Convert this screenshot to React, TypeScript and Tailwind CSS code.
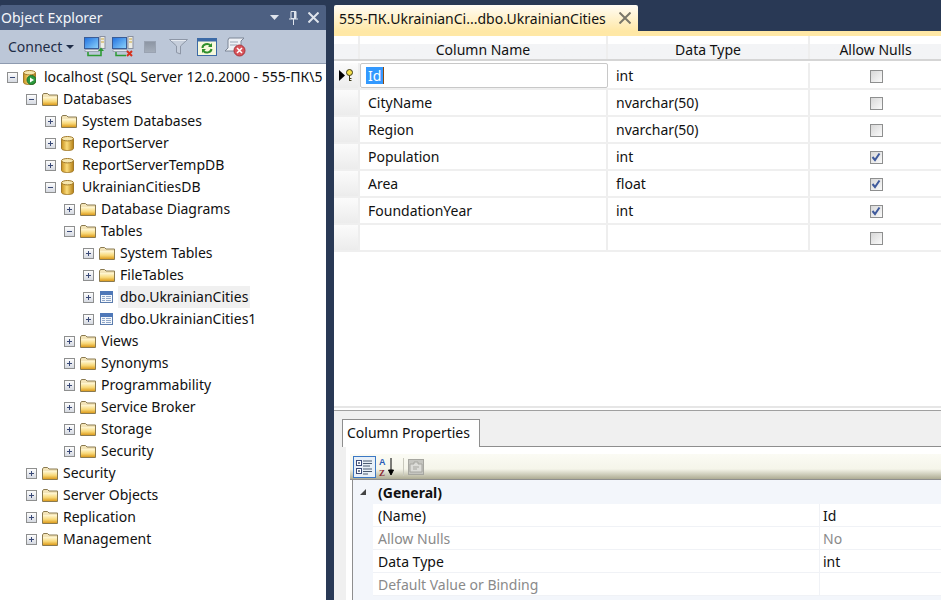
import React from "react";

const font = "font-['Noto_Sans','Open_Sans',sans-serif]";

type TreeItem = {
  label: string;
  level: number;
  icon: "server" | "db" | "folder" | "table";
  open?: boolean;
  selected?: boolean;
};

const tree: TreeItem[] = [
  { label: "localhost (SQL Server 12.0.2000 - 555-ПК\\5", level: 0, icon: "server", open: true },
  { label: "Databases", level: 1, icon: "folder", open: true },
  { label: "System Databases", level: 2, icon: "folder" },
  { label: "ReportServer", level: 2, icon: "db" },
  { label: "ReportServerTempDB", level: 2, icon: "db" },
  { label: "UkrainianCitiesDB", level: 2, icon: "db", open: true },
  { label: "Database Diagrams", level: 3, icon: "folder" },
  { label: "Tables", level: 3, icon: "folder", open: true },
  { label: "System Tables", level: 4, icon: "folder" },
  { label: "FileTables", level: 4, icon: "folder" },
  { label: "dbo.UkrainianCities", level: 4, icon: "table", selected: true },
  { label: "dbo.UkrainianCities1", level: 4, icon: "table" },
  { label: "Views", level: 3, icon: "folder" },
  { label: "Synonyms", level: 3, icon: "folder" },
  { label: "Programmability", level: 3, icon: "folder" },
  { label: "Service Broker", level: 3, icon: "folder" },
  { label: "Storage", level: 3, icon: "folder" },
  { label: "Security", level: 3, icon: "folder" },
  { label: "Security", level: 1, icon: "folder" },
  { label: "Server Objects", level: 1, icon: "folder" },
  { label: "Replication", level: 1, icon: "folder" },
  { label: "Management", level: 1, icon: "folder" },
];

const columns = [
  { name: "Id", type: "int", nulls: false },
  { name: "CityName", type: "nvarchar(50)", nulls: false },
  { name: "Region", type: "nvarchar(50)", nulls: false },
  { name: "Population", type: "int", nulls: true },
  { name: "Area", type: "float", nulls: true },
  { name: "FoundationYear", type: "int", nulls: true },
  { name: "", type: "", nulls: false },
];

const props = [
  { label: "(Name)", value: "Id" },
  { label: "Allow Nulls", value: "No", muted: true },
  { label: "Data Type", value: "int" },
  { label: "Default Value or Binding", value: "", muted: true },
];

const Expander = ({ open }: { open?: boolean }) => (
  <svg width="11" height="11" viewBox="0 0 11 11" className="shrink-0">
    <defs>
      <linearGradient id="exp" x1="0" y1="0" x2="0" y2="1">
        <stop offset="0" stopColor="#ffffff" />
        <stop offset="1" stopColor="#d4d8e0" />
      </linearGradient>
    </defs>
    <rect x="0.5" y="0.5" width="10" height="10" fill="url(#exp)" stroke="#8e8f8f" />
    <path d={open ? "M3 5.5h5" : "M3 5.5h5M5.5 3v5"} stroke="#3a4a78" fill="none" />
  </svg>
);

const FolderIcon = () => (
  <svg width="16" height="13" viewBox="0 0 16 13">
    <defs>
      <linearGradient id="fold" x1="0" y1="0" x2="0" y2="1">
        <stop offset="0" stopColor="#fff8d8" />
        <stop offset="0.55" stopColor="#f8d878" />
        <stop offset="1" stopColor="#dd9c1e" />
      </linearGradient>
    </defs>
    <path d="M.5 2 1.500.5h4L7 2h8.500v10.500H.5z" fill="#f3e4b8" stroke="#8a7a50" />
    <rect x="1" y="4" width="14" height="8" fill="url(#fold)" />
  </svg>
);

const DbIcon = ({ running }: { running?: boolean }) => (
  <svg width="13" height="15" viewBox="0 0 13 15">
    <defs>
      <linearGradient id="cyl" x1="0" y1="0" x2="1" y2="0">
        <stop offset="0" stopColor="#c68f1e" />
        <stop offset="0.45" stopColor="#fbdc7b" />
        <stop offset="1" stopColor="#b47f16" />
      </linearGradient>
    </defs>
    <path d="M.5 3v9.500c0 1.200 2.700 2 6 2s6-.8 6-2V3z" fill="url(#cyl)" stroke="#a27a2a" />
    <ellipse cx="6.500" cy="2.700" rx="6" ry="2.200" fill="#f7e7ae" stroke="#a27a2a" />
    {running && (
      <>
        <circle cx="8.500" cy="10" r="4.500" fill="#2c9a3e" stroke="#1e6e2c" />
        <path d="M7 7.500v5l4-2.500z" fill="#fff" />
      </>
    )}
  </svg>
);

const TableIcon = () => (
  <svg width="13" height="12" viewBox="0 0 13 12" className="ml-px">
    <rect x="0.5" y="0.5" width="12" height="11" fill="#f4f7fb" stroke="#5b7cad" />
    <rect x="0.5" y="0.5" width="12" height="3" fill="#4f78b8" stroke="#4f78b8" />
    <path d="M2 5.500h3M6 5.500h5M2 7.500h3M6 7.500h5M2 9.500h3M6 9.500h5" stroke="#8fa6c8" />
  </svg>
);

const TreeIcon = ({ kind }: { kind: TreeItem["icon"] }) => {
  if (kind === "folder") return <FolderIcon />;
  if (kind === "table") return <TableIcon />;
  return <DbIcon running={kind === "server"} />;
};

const ServerIcon = ({ bad }: { bad?: boolean }) => (
  <svg width="22" height="21" viewBox="0 0 22 21" className="shrink-0">
    <defs>
      <linearGradient id="scr" x1="0" y1="0" x2="1" y2="1">
        <stop offset="0" stopColor="#1f6fe0" />
        <stop offset="1" stopColor="#8ed4fb" />
      </linearGradient>
    </defs>
    <rect x="0.5" y="1.500" width="14" height="11" fill="url(#scr)" stroke="#3a5c96" />
    <rect x="16" y="0.5" width="5" height="12" fill="#eeeee6" stroke="#8a90a0" />
    <path d="M17 3h3M17 6h3" stroke="#c9a53c" />
    <path d="M1 13.500h14v2H1z" fill="#e6e9ef" stroke="#8a90a0" strokeWidth="0.7" />
    {bad ? (
      <>
        <path d="M4 16v3.500h10" stroke="#2d9a34" strokeWidth="1.5" fill="none" />
        <path d="M15 15l5 5M20 15l-5 5" stroke="#d6301c" strokeWidth="2" />
      </>
    ) : (
      <>
        <path d="M4 16v3.500h13V14" stroke="#2d9a34" strokeWidth="1.6" fill="none" />
        <path d="M14 15l3-3.500 3 3.500z" fill="#2d9a34" />
      </>
    )}
  </svg>
);

const Toolbar = () => (
  <div className="flex h-[33px] items-center bg-[#bcc7d8] pl-2 text-[#1e2c46]">
    <span className="w-[54px] text-[14px]">Connect</span>
    <svg width="8" height="4" viewBox="0 0 8 4" className="ml-[4px] shrink-0">
      <path d="M0 0h8L4 4z" fill="#1e2c46" />
    </svg>
    <div className="ml-[10px]">
      <ServerIcon />
    </div>
    <div className="ml-[6px]">
      <ServerIcon bad />
    </div>
    <div className="ml-[10px] h-[12px] w-[12px] border border-[#9aa3b2] bg-gradient-to-b from-[#8d96a4] to-[#a4adba]" />
    <svg width="19" height="16" viewBox="0 0 19 16" className="ml-[13px] shrink-0">
      <path d="M.5.5h18L11.500 7v8l-4-1.500V7z" fill="#c6cedb" stroke="#8d96a6" />
      <path d="M2 1.500h15" stroke="#e7ebf1" />
    </svg>
    <svg width="20" height="18" viewBox="0 0 20 18" className="ml-[9px] shrink-0">
      <rect x="0.5" y="0.5" width="19" height="17" fill="#f6f8dc" stroke="#3c6aa6" />
      <rect x="0.5" y="0.5" width="19" height="3" fill="#3c6aa6" />
      <path d="M5.500 10a4.500 4 0 0 1 8-2.500M14.500 11a4.500 4 0 0 1-8 2" stroke="#2f8f2c" strokeWidth="2" fill="none" />
      <path d="M15 5v4h-4zM5 15v-4h4z" fill="#2f8f2c" />
    </svg>
    <svg width="22" height="20" viewBox="0 0 22 20" className="ml-[7px] shrink-0">
      <path d="M5 1h15l-3 3v10H1l3-3V3z" fill="#eef1f6" stroke="#7d8696" />
      <path d="M6 5h8M6 8h7" stroke="#9aa4b4" />
      <circle cx="15.500" cy="13.500" r="5.500" fill="#d9535a" stroke="#a8353c" />
      <path d="M13 11l5 5M18 11l-5 5" stroke="#fff" strokeWidth="1.500" />
    </svg>
  </div>
);

const ObjectExplorer = () => (
  <div className="flex h-full w-[326px] shrink-0 flex-col pt-[5px]">
    <div className="flex h-[25px] items-center justify-between rounded-t-[2px] bg-[#4d6082] pl-[1px] pr-[7px] text-white">
      <span className="text-[14px] text-[#f4f6fa]">Object Explorer</span>
      <div className="flex items-center gap-[10px]">
        <svg width="9" height="5" viewBox="0 0 9 5">
          <path d="M0 0h9L4.500 5z" fill="#dfe4ec" />
        </svg>
        <svg width="9" height="14" viewBox="0 0 9 14">
          <path d="M2 .5h5v7H2zM0 8h9M4.500 8v6" stroke="#dfe4ec" fill="none" />
          <path d="M5 1h2v7H5z" fill="#dfe4ec" />
        </svg>
        <svg width="11" height="11" viewBox="0 0 11 11">
          <path d="M.5.5l10 10M10.500.5l-10 10" stroke="#dfe4ec" strokeWidth="2" />
        </svg>
      </div>
    </div>
    <Toolbar />
    <div className="h-px bg-[#8e9bb0]" />
    <div className="flex-1 overflow-hidden bg-white pt-[2px]">
      {tree.map((item, i) => (
        <TreeRow key={i} item={item} />
      ))}
    </div>
  </div>
);

const levelPad = ["pl-[7px]", "pl-[26px]", "pl-[45px]", "pl-[64px]", "pl-[83px]"];

const TreeRow = ({ item }: { item: TreeItem }) => (
  <div className={`flex h-[22px] items-center whitespace-nowrap text-[14px] text-[#111] ${levelPad[item.level]}`}>
    <Expander open={item.open} />
    <div className="ml-[5px] flex w-[18px] shrink-0 justify-start">
      <TreeIcon kind={item.icon} />
    </div>
    <span className={`ml-px px-[2px] leading-[22px] ${item.selected ? "bg-[#f0f0f0]" : ""}`}>{item.label}</span>
  </div>
);

const Check = ({ on }: { on: boolean }) => (
  <div className="flex h-[13px] w-[13px] items-center justify-center border border-[#8e8f8f] bg-gradient-to-br from-[#d8d8d8] to-[#fafafa]">
    {on && (
      <svg width="10" height="10" viewBox="0 0 10 10">
        <path d="M1.500 5 4 8l4.500-6.500" stroke="#3f5a9c" strokeWidth="2" fill="none" />
      </svg>
    )}
  </div>
);

const TableGrid = () => (
  <div className="h-[370px] shrink-0 bg-white text-[14px] text-[#111]">
    <div className="flex h-[25px] border-b-2 border-[#d5d5d5] bg-gradient-to-b from-white from-35% to-[#f3f4f6] to-35% text-center">
      <div className="w-[26px] border-r-2 border-[#eeeeee]" />
      <div className="w-[248px] border-r-2 border-[#eeeeee] leading-[27px]">Column Name</div>
      <div className="w-[202px] border-r-2 border-[#eeeeee] leading-[27px]">Data Type</div>
      <div className="w-[131px] leading-[27px]">Allow Nulls</div>
    </div>
    <div className="h-[2px]" />
    {columns.map((c, i) => (
      <div key={i} className="flex h-[27px] border-b-2 border-[#efefef]">
        <div className="flex w-[26px] items-center justify-center border-r-2 border-[#eeeeee] bg-gradient-to-b from-[#fbfbfb] to-[#ececec]">
          {i === 0 && (
            <svg width="16" height="13" viewBox="0 0 16 13">
              <path d="M1 1l6 5.500-6 5.500z" fill="#000" />
              <circle cx="11.500" cy="3.500" r="3" fill="#f5e04a" stroke="#3d3a18" />
              <path d="M11.500 6.500V12M11.500 9.500h2M11.500 11.500h2" stroke="#3d3a18" fill="none" />
            </svg>
          )}
        </div>
        {i === 0 ? (
          <div className="flex w-[248px] items-center rounded-[2px] border border-[#c8c8c8] pl-[5px]">
            <span className="h-[17px] border-r border-[#8a4a10] bg-[#3399ff] px-[2px] leading-[17px] text-white">Id</span>
          </div>
        ) : (
          <div className="flex w-[248px] items-center border-r-2 border-[#eeeeee] pl-[8px]">{c.name}</div>
        )}
        <div className="flex w-[202px] items-center border-r-2 border-[#eeeeee] pl-[8px]">{c.type}</div>
        <div className="flex w-[131px] items-center justify-center pl-px pt-px">
          <Check on={c.nulls} />
        </div>
      </div>
    ))}
  </div>
);

const PropsIcons = () => (
  <>
    <div className="flex h-[22px] w-[23px] items-center justify-center border border-[#3b78c4] bg-[#e8f0f8]">
      <svg width="17" height="16" viewBox="0 0 17 16">
        <rect x="0.5" y="1.500" width="5" height="5" fill="#fff" stroke="#3a4a78" />
        <rect x="0.5" y="9.500" width="5" height="5" fill="#fff" stroke="#3a4a78" />
        <path d="M2 4h2M3 3v2M2 12h2M3 11v2M7 2h9M7 4.500h9M7 7h7M7 10h9M7 12.500h9M7 15h5" stroke="#4a5a70" />
      </svg>
    </div>
    <svg width="18" height="20" viewBox="0 0 18 20" className="ml-[2px] shrink-0">
      <text x="1" y="8" fontSize="9" fontWeight="700" fill="#2a5cb8" fontFamily="Liberation Sans">
        A
      </text>
      <text x="1" y="18.500" fontSize="9" fontWeight="700" fill="#8c2a34" fontFamily="Liberation Serif">
        Z
      </text>
      <path d="M13 1v16M10.500 13l2.500 5 2.500-5z" stroke="#000" fill="#000" />
    </svg>
    <div className="ml-[7px] h-[18px] w-px bg-[#c9c9bd]" />
    <svg width="16" height="16" viewBox="0 0 16 16" className="ml-[4px] shrink-0">
      <rect x="0.5" y="0.5" width="15" height="15" fill="#c5c5c0" stroke="#a6a6a0" />
      <path d="M2 5h4V3h4v2h4v8H2z" fill="#dcdcd8" stroke="#a6a6a0" />
      <path d="M5 8h6M5 10h4" stroke="#a6a6a0" />
    </svg>
  </>
);

const ColumnProperties = () => (
  <div className="flex flex-1 flex-col overflow-hidden border-t border-[#a0a0a0] bg-[#f0f0f0]">
    <div className="flex h-[36px] shrink-0 items-end pl-[8px]">
      <div className="flex h-[28px] w-[138px] items-center border border-b-0 border-[#8e8e8e] bg-white pb-[3px] pl-[4px] text-[14px] text-[#111]">
        Column Properties
      </div>
      <div className="h-full flex-1 border-b border-[#8e8e8e]" />
    </div>
    <div className="ml-[12px] flex flex-1 flex-col bg-white pt-[7px]">
      <div className="ml-[4px] flex h-[25px] shrink-0 items-center bg-gradient-to-b from-[#fbfbf4] via-[#f5f5ea] via-60% to-[#aeac94] pl-[3px]">
        <PropsIcons />
      </div>
      <div className="ml-[4px] h-px shrink-0 bg-[#8e8e8e]" />
      <div className="ml-[6px] flex flex-1 border-l border-[#8e8e8e] bg-[#f3f6fb] text-[14px] text-[#111]">
        <div className="flex w-[20px] shrink-0 justify-center pt-[9px]">
          <svg width="6" height="6" viewBox="0 0 6 6">
            <path d="M6 0v6H0z" fill="#444" />
          </svg>
        </div>
        <div className="flex-1">
          <div className="flex h-[24px] items-center pl-[5px] font-bold">(General)</div>
          {props.map((p) => (
            <div key={p.label} className="flex h-[23px] border-b border-[#f0f2f6] bg-white">
              <div
                className={`flex w-[447px] items-center border-r border-[#f0f2f6] pl-[5px] ${
                  p.muted ? "text-[#8a8a8a]" : ""
                }`}
              >
                {p.label}
              </div>
              <div className={`flex items-center pl-[3px] ${p.muted ? "text-[#8a8a8a]" : ""}`}>{p.value}</div>
            </div>
          ))}
        </div>
      </div>
    </div>
  </div>
);

export default function App() {
  return (
    <div className={`flex h-[600px] w-[941px] overflow-hidden bg-[#293955] ${font}`}>
      <ObjectExplorer />
      <div className="flex h-full flex-1 flex-col pl-[8px] pt-[5px]">
        <div className="flex h-[26px] shrink-0">
          <div className="flex w-[304px] items-center rounded-t-[2px] bg-gradient-to-b from-[#fffcf4] to-[#ffe8a6] pl-[5px] text-[14px] text-[#111]">
            <span className="whitespace-nowrap">555-ПК.UkrainianCi...dbo.UkrainianCities</span>
            <svg width="12" height="12" viewBox="0 0 12 12" className="ml-[13px] shrink-0">
              <path d="M.5.5l11 11M11.500.5l-11 11" stroke="#7a776a" strokeWidth="2" />
            </svg>
          </div>
        </div>
        <div className="h-[5px] shrink-0 bg-[#ffe8a6]" />
        <TableGrid />
        <div className="h-[4px] shrink-0 border-t-2 border-[#e6e6e6] bg-white" />
        <ColumnProperties />
      </div>
    </div>
  );
}
